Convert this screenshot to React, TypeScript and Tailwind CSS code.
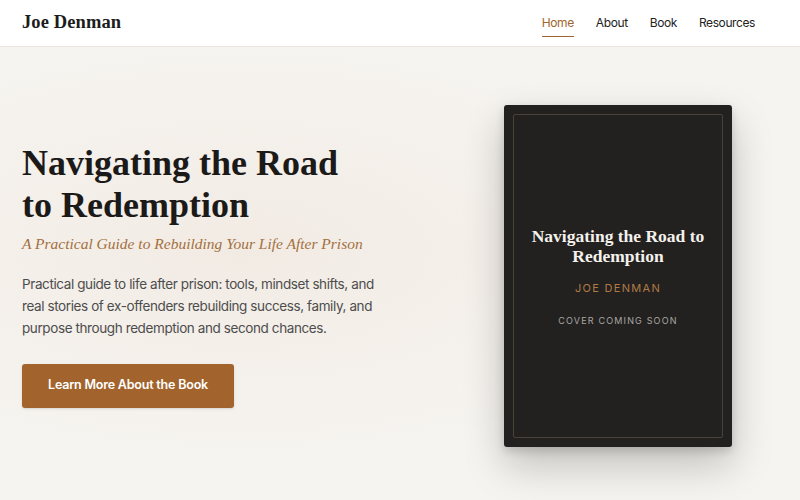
export default function App() {
  const serif = { fontFamily: '"Liberation Serif", "DejaVu Serif", serif' };
  return (
    <div
      className="w-[800px] h-[500px] overflow-hidden bg-[#f6f4f0] flex flex-col"
      style={{ fontFamily: 'Inter, "Liberation Sans", sans-serif' }}
    >
      <header className="h-[47px] shrink-0 bg-white border-b border-[#ebe8e3] flex items-center justify-between px-[22px]">
        <div className="text-[18.5px] font-bold text-[#1c1c1c] tracking-[0.1px]" style={serif}>
          Joe Denman
        </div>
        <nav className="flex items-center gap-[22px] pr-[23px] text-[12px] tracking-[-0.4px] text-[#222]">
          <a href="#" className="relative text-[#a0652f]">
            Home
            <span className="absolute left-0 right-0 -bottom-[5px] h-[1.5px] bg-[#a0652f]" />
          </a>
          <a href="#">About</a>
          <a href="#">Book</a>
          <a href="#">Resources</a>
        </nav>
      </header>

      <main className="flex-1 flex items-center justify-between px-[22px] bg-[radial-gradient(ellipse_at_30%_45%,#f2ebe4_0%,#f6f4f0_60%)]">
        <section className="w-[400px] pt-[2px]">
          <h1 className="w-[350px] text-[36px] leading-[42px] font-bold text-[#1c1a18]" style={serif}>
            Navigating the Road to Redemption
          </h1>
          <p className="mt-[6px] text-[15.5px] leading-[23px] italic text-[#a4703e]" style={serif}>
            A Practical Guide to Rebuilding Your Life After Prison
          </p>
          <p className="mt-[18px] w-[365px] text-[13.5px] tracking-[-0.4px] leading-[22px] text-[#4d4d4d]">
            Practical guide to life after prison: tools, mindset shifts, and real stories of ex-offenders rebuilding
            success, family, and purpose through redemption and second chances.
          </p>
          <button className="mt-[25px] w-[212px] h-[44px] rounded-[3px] bg-[#a2642c] text-white text-[12.5px] tracking-[-0.2px] font-semibold shadow-sm">
            Learn More About the Book
          </button>
        </section>

        <div className="pr-[46px] pt-[4px]">
          <div className="w-[228px] h-[342px] rounded-[3px] bg-[#222120] p-[9px] shadow-[0_18px_40px_rgba(0,0,0,0.22),0_4px_10px_rgba(0,0,0,0.15)]">
            <div className="h-full border border-[#4a4238] rounded-[2px] flex flex-col items-center justify-center text-center px-[16px] pt-[2px]">
              <div className="text-[17.5px] leading-[20px] font-bold text-[#f4f1ec]" style={serif}>
                Navigating the Road to Redemption
              </div>
              <div className="mt-[14px] text-[11px] tracking-[0.12em] text-[#b07a45]">JOE DENMAN</div>
              <div className="mt-[18px] text-[9px] tracking-[0.13em] text-[#a9a6a2]">COVER COMING SOON</div>
            </div>
          </div>
        </div>
      </main>
    </div>
  );
}
